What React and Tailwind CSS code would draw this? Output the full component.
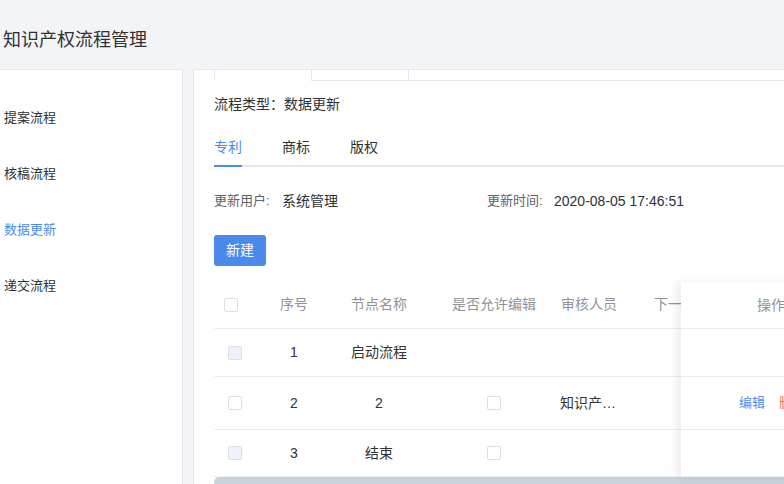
import React from 'react';

const rows = [
  { no: 1, name: '启动流程', disabled: true, edit: false, auditor: '', ops: false, h: 'h-[48px]' },
  { no: 2, name: '2', disabled: false, edit: true, auditor: '知识产…', ops: true, h: 'h-[53px]' },
  { no: 3, name: '结束', disabled: true, edit: true, auditor: '', ops: false, h: 'h-[47px]' },
];

function Checkbox({ disabled }) {
  return (
    <span
      className={
        'block w-[14px] h-[14px] rounded-[2px] border border-[#dcdfe6] ' +
        (disabled ? 'bg-[#edf2fc]' : 'bg-white')
      }
    />
  );
}

export default function App() {
  const menu = ['提案流程', '核稿流程', '数据更新', '递交流程'];

  return (
    <div className="w-[784px] h-[484px] overflow-hidden bg-[#f3f4f8] font-['Liberation_Sans','Noto_Sans_CJK_SC',sans-serif] text-[#333]">
      {/* Title bar */}
      <div className="h-[69px] pt-[27px] pl-[3px] text-[18px] leading-[26px] text-[#303133]">
        知识产权流程管理
      </div>

      <div className="flex gap-[10px] h-[415px]">
        {/* Sidebar */}
        <div className="w-[183px] shrink-0 bg-white border-t border-r border-[#e4e7ed] pt-[20px]">
          {menu.map((m) => (
            <div
              key={m}
              className={
                'h-[56px] flex items-center pl-[4px] text-[13px] ' +
                (m === '数据更新' ? 'text-[#4a8cf0]' : 'text-[#303133]')
              }
            >
              {m}
            </div>
          ))}
        </div>

        {/* Main panel */}
        <div className="flex-1 min-w-0 bg-white border-t border-l border-[#e4e7ed] pl-[20px] overflow-hidden">
          {/* card tabs (scrolled) */}
          <div className="flex h-[11px]">
            <div className="w-[98px] shrink-0 border-l border-r border-[#e4e7ed]" />
            <div className="w-[97px] shrink-0 border-r border-b border-[#e4e7ed]" />
            <div className="flex-1 border-b border-[#e4e7ed]" />
          </div>

          <div className="mt-[13px] text-[14px] leading-[20px] text-[#303133]">流程类型：数据更新</div>

          {/* Tabs */}
          <div className="mt-[11px] relative border-b-2 border-[#e4e7ed] flex h-[42px] text-[14px] leading-[44px]">
            <div className="relative text-[#4a8cf0]">
              专利
              <span className="absolute left-0 right-0 -bottom-[2px] h-[2px] bg-[#4a8cf0]" />
            </div>
            <div className="ml-[40px] text-[#303133]">商标</div>
            <div className="ml-[40px] text-[#303133]">版权</div>
          </div>

          {/* Info */}
          <div className="mt-[24px] flex text-[14px] leading-[20px]">
            <div className="w-[273px] flex">
              <span className="w-[68px] text-[13px] text-[#606266]">更新用户:</span>
              <span className="text-[#303133]">系统管理</span>
            </div>
            <div className="flex">
              <span className="w-[67px] text-[13px] text-[#606266]">更新时间:</span>
              <span className="text-[#303133]">2020-08-05 17:46:51</span>
            </div>
          </div>

          <button className="mt-[24px] w-[52px] h-[31px] rounded-[3px] bg-[#4a8aea] text-white text-[14px] block">
            新建
          </button>

          {/* Table */}
          <div className="mt-[15px] relative w-[700px] text-[14px]">
            <div className="flex h-[48px] items-center border-b border-[#ebeef5] text-[#909399]">
              <div className="w-[48px] pl-[10px]">
                <Checkbox />
              </div>
              <div className="w-[64px] text-center">序号</div>
              <div className="w-[106px] text-center">节点名称</div>
              <div className="w-[124px] text-center">是否允许编辑</div>
              <div className="w-[88px] pl-[5px]">审核人员</div>
              <div className="pl-[10px]">下一节点</div>
            </div>
            {rows.map((r) => (
              <div key={r.no} className={'flex items-center border-b border-[#ebeef5] ' + r.h}>
                <div className="w-[48px] pl-[14px]">
                  <Checkbox disabled={r.disabled} />
                </div>
                <div className="w-[64px] text-center">{r.no}</div>
                <div className="w-[106px] text-center">{r.name}</div>
                <div className="w-[124px] flex justify-center">{r.edit && <Checkbox />}</div>
                <div className="w-[88px] pl-[4px]">{r.auditor}</div>
                <div className="pl-[10px]" />
              </div>
            ))}
            <div className="h-[10px] rounded-l-full bg-[#c9d1d9]" />

            {/* fixed right column */}
            <div className="absolute left-[467px] top-[1px] w-[240px] bg-white shadow-[-5px_0_8px_rgba(0,0,0,0.07)]">
              <div className="h-[47px] flex items-center border-b border-[#ebeef5] pl-[76px] text-[#909399]">操作</div>
              {rows.map((r) => (
                <div key={r.no} className={'flex items-center border-b border-[#ebeef5] pl-[58px] text-[13px] ' + r.h}>
                  {r.ops && (
                    <>
                      <span className="text-[#4a8cf0]">编辑</span>
                      <span className="ml-[14px] text-[#f56c6c]">删除</span>
                    </>
                  )}
                </div>
              ))}
            </div>
          </div>
        </div>
      </div>
    </div>
  );
}
